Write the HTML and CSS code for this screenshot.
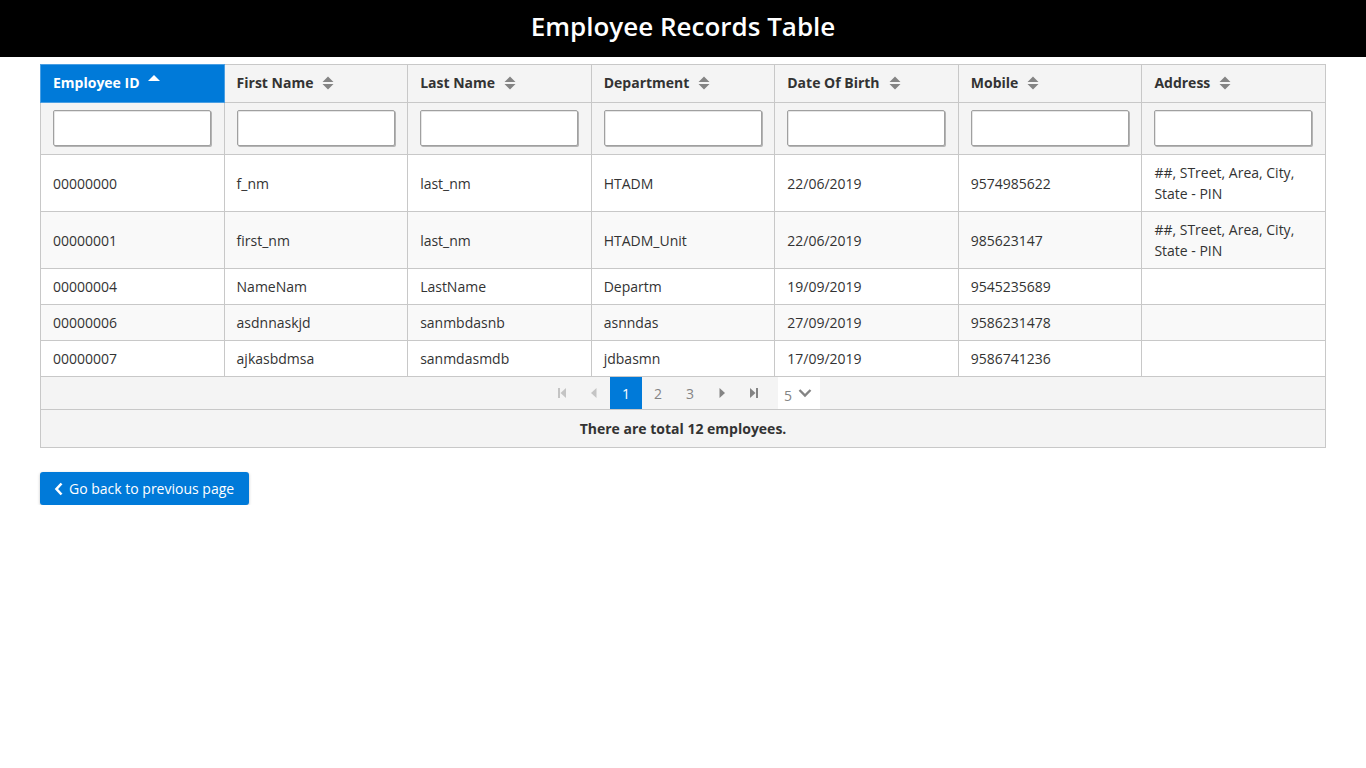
FILE: index.html
```html
<!DOCTYPE html>
<html>
<head>
<meta charset="utf-8">
<title>Employee Records Table</title>
<link rel="stylesheet" href="styles.css">
</head>
<body>
<header class="topbar"><h1 class="title">Employee Records Table</h1></header>
<main class="content">
  <div class="datatable">
    <table class="grid">
      <thead>
        <tr class="head-row">
          <th class="th sorted"><div class="th-inner"><span>Employee ID</span><svg class="sort-icon up" width="14" height="14" viewBox="0 0 14 14"><path d="M1 9 L7 3 L13 9 Z" fill="#fff"/></svg></div></th>
          <th class="th"><div class="th-inner"><span>First Name</span><svg class="sort-icon" width="14" height="16" viewBox="0 0 14 16"><path d="M1.5 7 L7 1.5 L12.5 7 Z M1.5 9 L7 14.5 L12.5 9 Z" fill="#848484"/></svg></div></th>
          <th class="th"><div class="th-inner"><span>Last Name</span><svg class="sort-icon" width="14" height="16" viewBox="0 0 14 16"><path d="M1.5 7 L7 1.5 L12.5 7 Z M1.5 9 L7 14.5 L12.5 9 Z" fill="#848484"/></svg></div></th>
          <th class="th"><div class="th-inner"><span>Department</span><svg class="sort-icon" width="14" height="16" viewBox="0 0 14 16"><path d="M1.5 7 L7 1.5 L12.5 7 Z M1.5 9 L7 14.5 L12.5 9 Z" fill="#848484"/></svg></div></th>
          <th class="th"><div class="th-inner"><span>Date Of Birth</span><svg class="sort-icon" width="14" height="16" viewBox="0 0 14 16"><path d="M1.5 7 L7 1.5 L12.5 7 Z M1.5 9 L7 14.5 L12.5 9 Z" fill="#848484"/></svg></div></th>
          <th class="th"><div class="th-inner"><span>Mobile</span><svg class="sort-icon" width="14" height="16" viewBox="0 0 14 16"><path d="M1.5 7 L7 1.5 L12.5 7 Z M1.5 9 L7 14.5 L12.5 9 Z" fill="#848484"/></svg></div></th>
          <th class="th"><div class="th-inner"><span>Address</span><svg class="sort-icon" width="14" height="16" viewBox="0 0 14 16"><path d="M1.5 7 L7 1.5 L12.5 7 Z M1.5 9 L7 14.5 L12.5 9 Z" fill="#848484"/></svg></div></th>
        </tr>
        <tr class="filter-row">
          <th class="fth"><input class="filter" type="text"></th>
          <th class="fth"><input class="filter" type="text"></th>
          <th class="fth"><input class="filter" type="text"></th>
          <th class="fth"><input class="filter" type="text"></th>
          <th class="fth"><input class="filter" type="text"></th>
          <th class="fth"><input class="filter" type="text"></th>
          <th class="fth"><input class="filter" type="text"></th>
        </tr>
      </thead>
      <tbody>
        <tr class="row">
          <td class="td">00000000</td><td class="td">f_nm</td><td class="td">last_nm</td><td class="td">HTADM</td><td class="td">22/06/2019</td><td class="td">9574985622</td><td class="td">##, STreet, Area, City, State - PIN</td>
        </tr>
        <tr class="row alt">
          <td class="td">00000001</td><td class="td">first_nm</td><td class="td">last_nm</td><td class="td">HTADM_Unit</td><td class="td">22/06/2019</td><td class="td">985623147</td><td class="td">##, STreet, Area, City, State - PIN</td>
        </tr>
        <tr class="row">
          <td class="td">00000004</td><td class="td">NameNam</td><td class="td">LastName</td><td class="td">Departm</td><td class="td">19/09/2019</td><td class="td">9545235689</td><td class="td"></td>
        </tr>
        <tr class="row alt">
          <td class="td">00000006</td><td class="td">asdnnaskjd</td><td class="td">sanmbdasnb</td><td class="td">asnndas</td><td class="td">27/09/2019</td><td class="td">9586231478</td><td class="td"></td>
        </tr>
        <tr class="row">
          <td class="td">00000007</td><td class="td">ajkasbdmsa</td><td class="td">sanmdasmdb</td><td class="td">jdbasmn</td><td class="td">17/09/2019</td><td class="td">9586741236</td><td class="td"></td>
        </tr>
      </tbody>
    </table>
    <div class="paginator">
      <span class="pg-btn disabled"><svg width="12" height="12" viewBox="0 0 12 12"><rect x="2" y="1" width="2" height="10" fill="currentColor"/><path d="M10 1 L10 11 L4.5 6 Z" fill="currentColor"/></svg></span>
      <span class="pg-btn disabled"><svg width="12" height="12" viewBox="0 0 12 12"><path d="M8.5 1 L8.5 11 L3 6 Z" fill="currentColor"/></svg></span>
      <span class="pg-btn page active">1</span>
      <span class="pg-btn page">2</span>
      <span class="pg-btn page">3</span>
      <span class="pg-btn"><svg width="12" height="12" viewBox="0 0 12 12"><path d="M3.5 1 L3.5 11 L9 6 Z" fill="currentColor"/></svg></span>
      <span class="pg-btn"><svg width="12" height="12" viewBox="0 0 12 12"><path d="M2 1 L2 11 L7.5 6 Z" fill="currentColor"/><rect x="8" y="1" width="2" height="10" fill="currentColor"/></svg></span>
      <span class="rows-dd"><span class="dd-label">5</span><svg width="14" height="10" viewBox="0 0 14 10"><path d="M1.5 2 L7 7.5 L12.5 2" fill="none" stroke="#848484" stroke-width="2.4"/></svg></span>
    </div>
    <div class="table-footer">There are total 12 employees.</div>
  </div>
  <button class="back-btn" type="button"><svg width="10" height="14" viewBox="0 0 10 14"><path d="M7.5 1.5 L2.5 7 L7.5 12.5" fill="none" stroke="#fff" stroke-width="2.6"/></svg><span>Go back to previous page</span></button>
</main>
</body>
</html>
```

FILE: styles.css
```css
* { box-sizing: border-box; }
body {
  margin: 0;
  font-family: "Open Sans", "Liberation Sans", sans-serif;
  font-size: 14px;
  color: #333333;
  background: #ffffff;
}
.topbar {
  background: #000000;
  height: 57px;
  display: flex;
  align-items: center;
  justify-content: center;
  padding-bottom: 6px;
}
.title {
  margin: 0;
  color: #ffffff;
  font-size: 26px;
  font-weight: 600;
  line-height: 1;
}
.content {
  padding: 7px 40px 0 40px;
}
.datatable {
  width: 1286px;
}
.grid {
  width: 100%;
  border-collapse: collapse;
  table-layout: fixed;
}
.th {
  background: #f4f4f4;
  border: 1px solid #c8c8c8;
  padding: 7px 12px 9px 12px;
  text-align: left;
  font-weight: 700;
  color: #333333;
  white-space: nowrap;
}
.th-inner {
  display: flex;
  align-items: center;
  height: 21px;
}
.sort-icon { margin-left: 8px; }
.sort-icon.up { margin-left: 7px; position: relative; top: -4px; }
.th.sorted {
  background: #007ad9;
  color: #ffffff;
  border-color: #4a9fe3;
}
.fth {
  background: #f4f4f4;
  border: 1px solid #c8c8c8;
  padding: 7px 12px 8px 12px;
}
.filter {
  display: block;
  width: 158px;
  height: 36px;
  border: 1px solid #a0a0a0;
  border-radius: 2px;
  box-shadow: inset 1px 1px 0 #e6e6e6, 1px 1px 0 #b4b4b4;
  background: #ffffff;
  font-family: inherit;
  font-size: 14px;
}
.td {
  border: 1px solid #c8c8c8;
  padding: 7px 12px;
  line-height: 21px;
  color: #333333;
  vertical-align: middle;
}
.row { background: #ffffff; }
.row.alt { background: #f9f9f9; }
.paginator {
  background: #f4f4f4;
  border: 1px solid #c8c8c8;
  border-top: 0;
  display: flex;
  justify-content: center;
  align-items: stretch;
  height: 33px;
}
.pg-btn {
  width: 32px;
  height: 32px;
  display: flex;
  align-items: center;
  justify-content: center;
  color: #848484;
}
.pg-btn.disabled { color: #c4c4c4; }
.pg-btn.page { color: #848484; font-size: 14px; }
.pg-btn.active { background: #007ad9; color: #ffffff; }
.rows-dd {
  margin-left: 8px;
  width: 42px;
  height: 32px;
  background: #ffffff;
  display: flex;
  align-items: center;
  padding-left: 6px;
  gap: 6px;
  color: #848484;
}
.dd-label { position: relative; top: 2px; }
.table-footer {
  background: #f4f4f4;
  border: 1px solid #c8c8c8;
  border-top: 0;
  height: 38px;
  display: flex;
  align-items: center;
  justify-content: center;
  font-weight: 700;
  color: #333333;
}
.back-btn {
  margin-top: 24px;
  height: 33px;
  width: 209px;
  background: #007ad9;
  color: #ffffff;
  border: 0;
  border-radius: 3px;
  box-shadow: 0 1px 3px rgba(0,0,0,0.25);
  font-family: inherit;
  font-size: 14px;
  display: flex;
  align-items: center;
  gap: 5px;
  padding: 0 0 0 14px;
}
```
